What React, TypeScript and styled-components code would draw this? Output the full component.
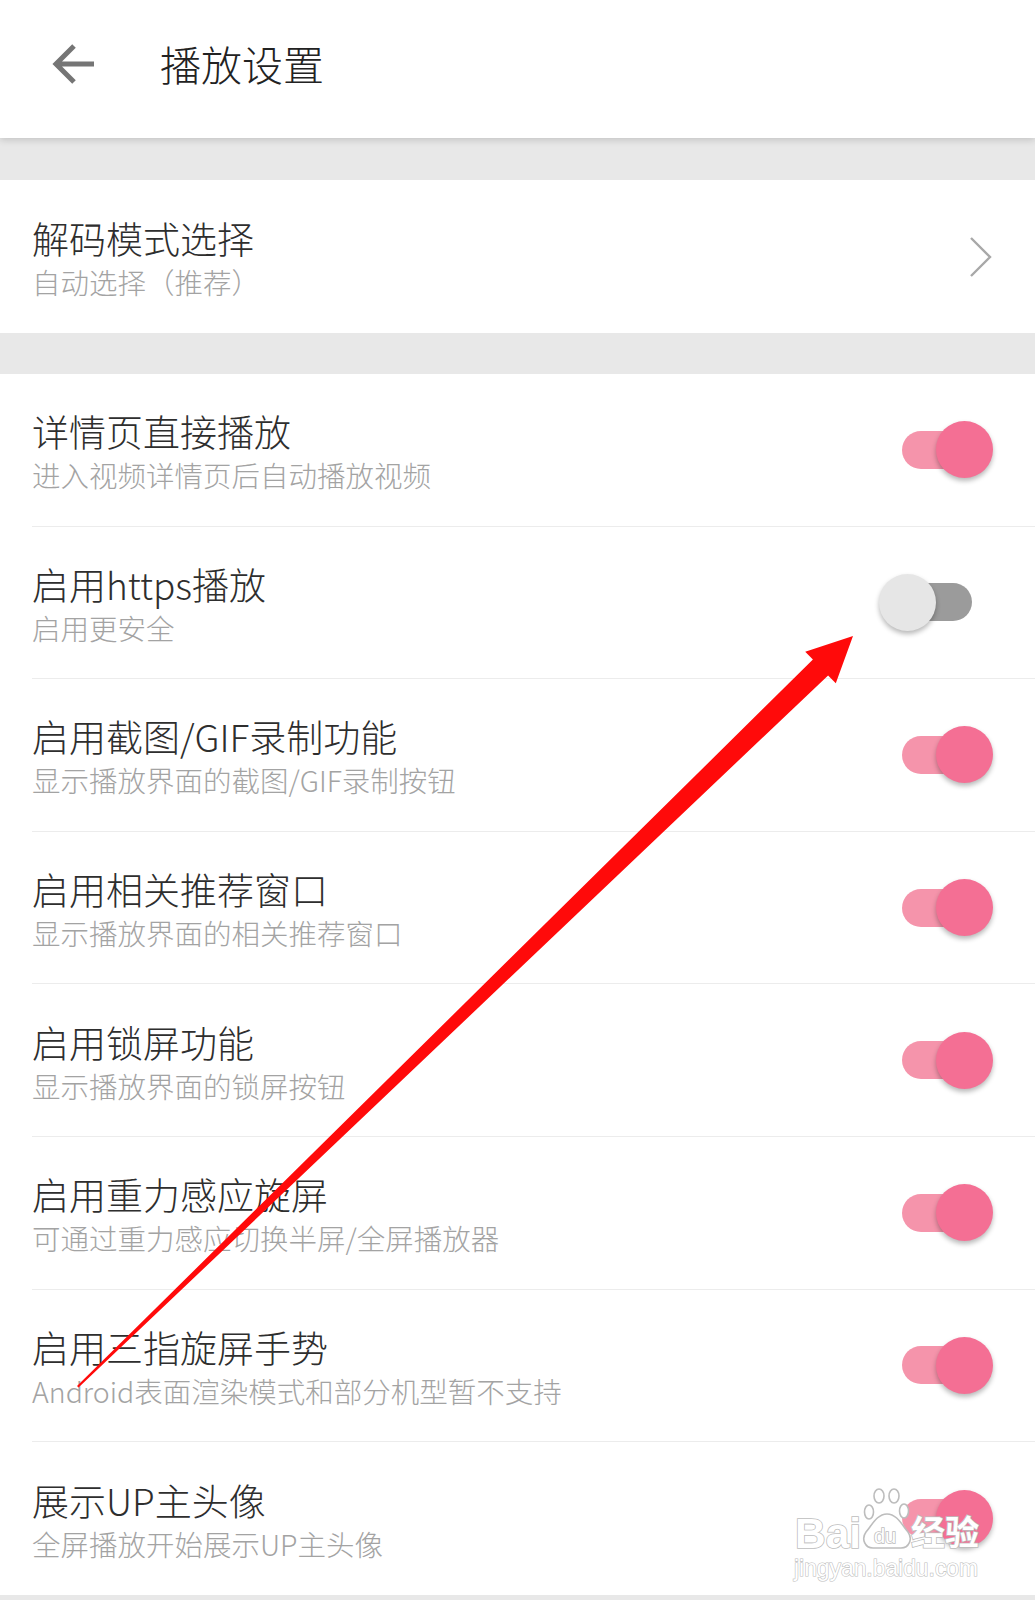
import React from 'react';
import styled, { createGlobalStyle } from 'styled-components';

const GlobalStyle = createGlobalStyle`
  html, body { margin: 0; padding: 0; background: #ffffff; }
  body { font-family: "Noto Sans CJK SC", "Noto Sans", sans-serif; }
  * { box-sizing: border-box; }
`;

const Page = styled.div`
  position: relative;
  width: 1035px;
  min-height: 1600px;
  background: #e8e8e8;
  display: flex;
  flex-direction: column;
  font-family: "Noto Sans CJK SC", "Noto Sans", sans-serif;
  overflow: hidden;
`;

const Header = styled.header`
  position: relative;
  z-index: 1;
  height: 138px;
  background: #ffffff;
  display: flex;
  align-items: center;
  padding-left: 50px;
  padding-bottom: 10px;
  gap: 62px;
  box-shadow: 0 2px 7px rgba(0, 0, 0, 0.16);
`;

const BackButton = styled.button`
  border: none;
  background: none;
  padding: 0;
  width: 48px;
  height: 48px;
  display: flex;
  align-items: center;
  justify-content: center;
  cursor: pointer;
`;

const HeaderTitle = styled.h1`
  margin: 0;
  font-size: 41px;
  font-weight: 300;
  color: #222222;
  line-height: 1;
  padding-bottom: 2px;
`;

const Section = styled.section<{ $gap: number }>`
  margin-top: ${(p) => p.$gap}px;
  background: #ffffff;
  display: flex;
  flex-direction: column;
`;

const Row = styled.div<{ $h: number }>`
  height: ${(p) => p.$h}px;
  padding-left: 32px;
  display: flex;
`;

const RowInner = styled.div<{ $divider: boolean }>`
  flex: 1;
  display: flex;
  align-items: center;
  justify-content: space-between;
  padding-right: 42px;
  border-bottom: ${(p) => (p.$divider ? '1px solid #ececec' : 'none')};
`;

const TextBlock = styled.div`
  display: flex;
  flex-direction: column;
  padding-top: 7px;
`;

const Title = styled.div`
  font-size: 37px;
  line-height: 44px;
  color: #2e2e2e;
  font-weight: 300;
  white-space: nowrap;
`;

const Sub = styled.div`
  font-size: 28.5px;
  line-height: 44px;
  color: #a3a3a3;
  font-weight: 300;
  white-space: nowrap;
`;

const SwitchBox = styled.div`
  position: relative;
  width: 114px;
  height: 57px;
  flex-shrink: 0;
`;

const Track = styled.div<{ $on: boolean }>`
  position: absolute;
  left: 23px;
  top: 9.5px;
  width: 70px;
  height: 38px;
  border-radius: 19px;
  background: ${(p) => (p.$on ? '#f594ab' : '#9b9b9b')};
`;

const Thumb = styled.div<{ $on: boolean }>`
  position: absolute;
  top: 0;
  left: ${(p) => (p.$on ? '57px' : '0px')};
  width: 57px;
  height: 57px;
  border-radius: 50%;
  background: ${(p) => (p.$on ? '#f46f94' : '#e6e6e6')};
  box-shadow: 0 3px 5px rgba(0, 0, 0, 0.28);
`;

const Overlay = styled.svg`
  position: absolute;
  left: 0;
  top: 0;
  width: 1035px;
  height: 1600px;
  pointer-events: none;
  z-index: 5;
`;

type Item = { title: string; sub: string; on: boolean };

const items: Item[] = [
  { title: '详情页直接播放', sub: '进入视频详情页后自动播放视频', on: true },
  { title: '启用https播放', sub: '启用更安全', on: false },
  { title: '启用截图/GIF录制功能', sub: '显示播放界面的截图/GIF录制按钮', on: true },
  { title: '启用相关推荐窗口', sub: '显示播放界面的相关推荐窗口', on: true },
  { title: '启用锁屏功能', sub: '显示播放界面的锁屏按钮', on: true },
  { title: '启用重力感应旋屏', sub: '可通过重力感应切换半屏/全屏播放器', on: true },
  { title: '启用三指旋屏手势', sub: 'Android表面渲染模式和部分机型暂不支持', on: true },
  { title: '展示UP主头像', sub: '全屏播放开始展示UP主头像', on: true },
];

const Switch: React.FC<{ on: boolean }> = ({ on }) => (
  <SwitchBox>
    <Track $on={on} />
    <Thumb $on={on} />
  </SwitchBox>
);

const BackIcon = () => (
  <svg width="44" height="44" viewBox="0 0 44 44">
    <path
      d="M42 22H5M22 4L4 22l18 18"
      fill="none"
      stroke="#757575"
      strokeWidth="5"
      strokeLinecap="butt"
      strokeLinejoin="miter"
    />
  </svg>
);

const Chevron = () => (
  <svg width="24" height="40" viewBox="0 0 24 40">
    <path d="M2 1l19 19L2 39" fill="none" stroke="#a8a8a8" strokeWidth="2.4" />
  </svg>
);

const Annotations = () => {
  const wm = {
    fill: '#ffffff',
    stroke: '#bdbdbd',
    strokeWidth: 1.6,
    paintOrder: 'stroke' as const,
  };
  return (
    <Overlay viewBox="0 0 1035 1600">
      {/* red annotation arrow */}
      <polygon
        points="77,1386 812.9,659.6 805.2,651.7 853,636 835.8,683.3 828.1,675.4 78.5,1387.5"
        fill="#ff0a0a"
      />
      {/* baidu jingyan watermark */}
      <g fontFamily="'Liberation Sans', Arial, sans-serif" fontWeight="700">
        <text x="795" y="1548" fontSize="42" {...wm} textLength={66} lengthAdjust="spacingAndGlyphs">
          Bai
        </text>
        <g fill="#ffffff" stroke="#bdbdbd" strokeWidth="1.6">
          <ellipse cx="869" cy="1512" rx="4.5" ry="7" />
          <ellipse cx="879" cy="1496" rx="5" ry="7" />
          <ellipse cx="894" cy="1496" rx="5" ry="7" />
          <ellipse cx="904" cy="1511" rx="4.5" ry="7" />
          <path d="M887 1514c-10 0-15 11-21 18-5 7-1 16 7 16h28c8 0 12-9 7-16-6-7-11-18-21-18z" />
        </g>
        <text x="874" y="1543" fontSize="20" {...wm} fontWeight="400">
          du
        </text>
        <text
          x="911"
          y="1545"
          fontSize="34"
          fontFamily="'Noto Sans CJK SC', sans-serif"
          {...wm}
        >
          经验
        </text>
        <text
          x="794"
          y="1576"
          fontSize="24"
          fontWeight="400"
          {...wm}
          strokeWidth={1.2}
          textLength={184}
          lengthAdjust="spacingAndGlyphs"
        >
          jingyan.baidu.com
        </text>
      </g>
    </Overlay>
  );
};

export default function App() {
  return (
    <>
      <GlobalStyle />
      <Page>
        <Header>
          <BackButton aria-label="返回">
            <BackIcon />
          </BackButton>
          <HeaderTitle>播放设置</HeaderTitle>
        </Header>
        <Section $gap={42}>
          <Row $h={153}>
            <RowInner $divider={false}>
              <TextBlock>
                <Title>解码模式选择</Title>
                <Sub>自动选择（推荐）</Sub>
              </TextBlock>
              <Chevron />
            </RowInner>
          </Row>
        </Section>
        <Section $gap={41}>
          {items.map((it, i) => (
            <Row key={it.title} $h={152.6}>
              <RowInner $divider={i < items.length - 1}>
                <TextBlock>
                  <Title>{it.title}</Title>
                  <Sub>{it.sub}</Sub>
                </TextBlock>
                <Switch on={it.on} />
              </RowInner>
            </Row>
          ))}
        </Section>
        <Annotations />
      </Page>
    </>
  );
}
